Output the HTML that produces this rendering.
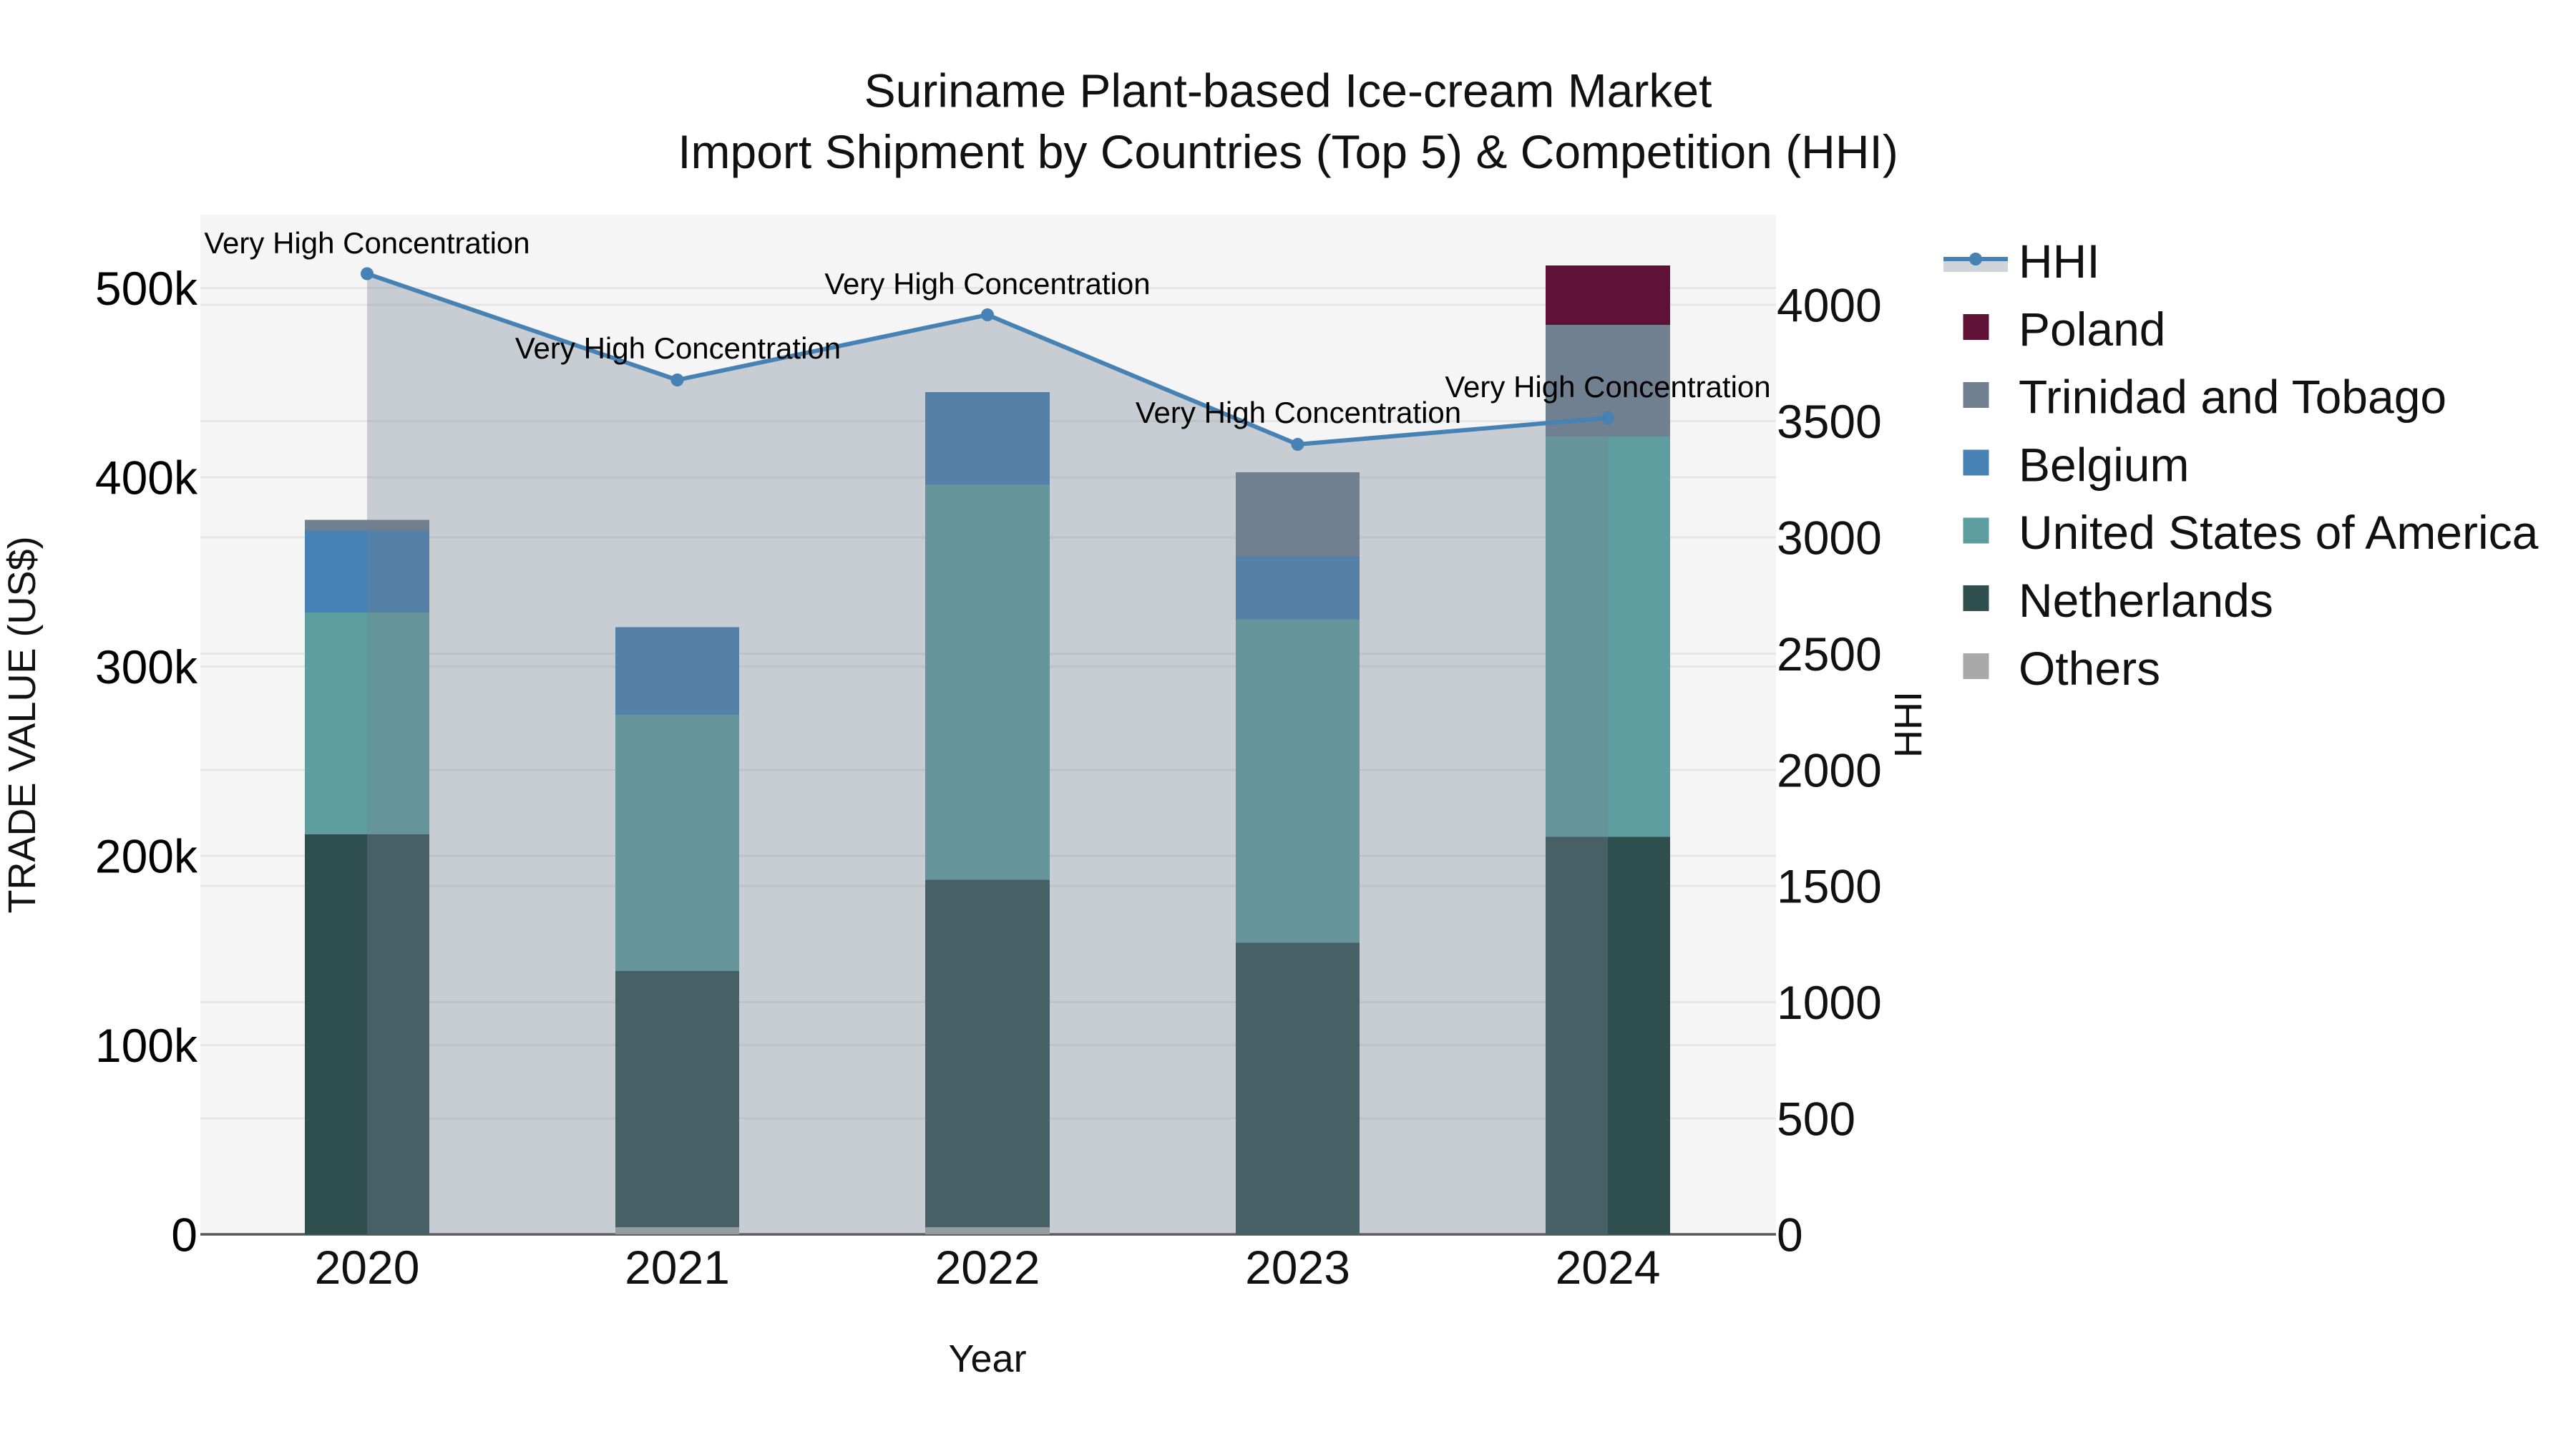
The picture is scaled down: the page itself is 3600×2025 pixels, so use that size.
<!DOCTYPE html>
<html lang="en">
<head>
<meta charset="utf-8">
<title>Suriname Plant-based Ice-cream Market</title>
<style>
html,body{margin:0;padding:0;background:#fff;width:3600px;height:2025px;overflow:hidden}
svg{display:block}
text{font-family:"Liberation Sans",sans-serif;fill:#111}
.t{font-size:66px}
.a{font-size:42px;fill:#000;text-anchor:middle}
.k{font-size:66px;fill:#000;text-anchor:end}
.r{font-size:66px;text-anchor:start}
.x{font-size:66px;text-anchor:middle}
.l{font-size:66px}
.h{font-size:54px;text-anchor:middle}
</style>
</head>
<body>
<svg xmlns="http://www.w3.org/2000/svg" width="3600" height="2025" viewBox="0 0 3600 2025">
<rect width="3600" height="2025" fill="#fff"/>
<rect x="280" y="300" width="2202" height="1425" fill="#f5f5f5"/>
<g stroke="#e6e6e6" stroke-width="3">
<path d="M280 402.5H2482M280 667H2482M280 931.5H2482M280 1196H2482M280 1460.5H2482"/>
<path d="M280 426H2482M280 588.5H2482M280 751H2482M280 913.5H2482M280 1076H2482M280 1238H2482M280 1400.5H2482M280 1563H2482"/>
</g>
<path d="M280 1725H2482" stroke="#555" stroke-width="3.5"/>
<g>
<rect x="426" y="1166" width="174" height="559" fill="#2f4f4f"/>
<rect x="426" y="856" width="174" height="310" fill="#5f9ea0"/>
<rect x="426" y="741.5" width="174" height="114.5" fill="#4682b4"/>
<rect x="426" y="726.5" width="174" height="15" fill="#708090"/>

<rect x="860" y="1715" width="173" height="10" fill="#a9a9a9"/>
<rect x="860" y="1357" width="173" height="358" fill="#2f4f4f"/>
<rect x="860" y="999" width="173" height="358" fill="#5f9ea0"/>
<rect x="860" y="876.5" width="173" height="122.5" fill="#4682b4"/>

<rect x="1293" y="1715" width="174" height="10" fill="#a9a9a9"/>
<rect x="1293" y="1229.5" width="174" height="485.5" fill="#2f4f4f"/>
<rect x="1293" y="677" width="174" height="552.5" fill="#5f9ea0"/>
<rect x="1293" y="548" width="174" height="129" fill="#4682b4"/>

<rect x="1727" y="1317.5" width="173" height="407.5" fill="#2f4f4f"/>
<rect x="1727" y="865.5" width="173" height="452" fill="#5f9ea0"/>
<rect x="1727" y="777" width="173" height="88.5" fill="#4682b4"/>
<rect x="1727" y="660" width="173" height="117" fill="#708090"/>

<rect x="2160" y="1169.5" width="174" height="555.5" fill="#2f4f4f"/>
<rect x="2160" y="610" width="174" height="559.5" fill="#5f9ea0"/>
<rect x="2160" y="454" width="174" height="156" fill="#708090"/>
<rect x="2160" y="371" width="174" height="83" fill="#601236"/>
</g>
<path d="M513 382.5L946.5 531L1380 440L1813.5 621L2247 584V1725H513Z" fill="#738294" fill-opacity="0.34"/>
<path d="M513 382.5L946.5 531L1380 440L1813.5 621L2247 584" fill="none" stroke="#4682b4" stroke-width="6" stroke-linejoin="round"/>
<g fill="#4682b4">
<circle cx="513" cy="382.5" r="9"/><circle cx="946.5" cy="531" r="9"/><circle cx="1380" cy="440" r="9"/><circle cx="1813.5" cy="621" r="9"/><circle cx="2247" cy="584" r="9"/>
</g>
<text class="a" x="513" y="354">Very High Concentration</text>
<text class="a" x="947.5" y="501">Very High Concentration</text>
<text class="a" x="1380" y="411">Very High Concentration</text>
<text class="a" x="1814.5" y="591">Very High Concentration</text>
<text class="a" x="2247" y="555">Very High Concentration</text>

<text class="t" x="1800" y="149.5" text-anchor="middle">Suriname Plant-based Ice-cream Market</text>
<text class="t" x="1800" y="235" text-anchor="middle">Import Shipment by Countries (Top 5) &amp; Competition (HHI)</text>

<text class="k" x="276" y="426">500k</text>
<text class="k" x="276" y="690.5">400k</text>
<text class="k" x="276" y="955">300k</text>
<text class="k" x="276" y="1219.5">200k</text>
<text class="k" x="276" y="1484">100k</text>
<text class="k" x="276" y="1748.5">0</text>

<text class="r" x="2483" y="449.5">4000</text>
<text class="r" x="2483" y="612">3500</text>
<text class="r" x="2483" y="774.5">3000</text>
<text class="r" x="2483" y="937">2500</text>
<text class="r" x="2483" y="1099.5">2000</text>
<text class="r" x="2483" y="1261.5">1500</text>
<text class="r" x="2483" y="1424">1000</text>
<text class="r" x="2483" y="1586.5">500</text>
<text class="r" x="2483" y="1748.5">0</text>

<text class="x" x="513" y="1794">2020</text>
<text class="x" x="946.5" y="1794">2021</text>
<text class="x" x="1380" y="1794">2022</text>
<text class="x" x="1813.5" y="1794">2023</text>
<text class="x" x="2247" y="1794">2024</text>

<text class="h" x="1380" y="1917">Year</text>
<text class="h" transform="translate(49 1013) rotate(-90)">TRADE VALUE (US$)</text>
<text class="h" transform="translate(2685 1012.5) rotate(-90)">HHI</text>

<rect x="2716" y="362" width="90" height="18" fill="#738294" fill-opacity="0.34"/>
<path d="M2716 362H2806" stroke="#4682b4" stroke-width="6"/>
<circle cx="2761" cy="362" r="9" fill="#4682b4"/>
<g>
<rect x="2743.5" y="439" width="36" height="36" fill="#601236"/>
<rect x="2743.5" y="534" width="36" height="36" fill="#708090"/>
<rect x="2743.5" y="628.5" width="36" height="36" fill="#4682b4"/>
<rect x="2743.5" y="723.5" width="36" height="36" fill="#5f9ea0"/>
<rect x="2743.5" y="818" width="36" height="36" fill="#2f4f4f"/>
<rect x="2743.5" y="913" width="36" height="36" fill="#a9a9a9"/>
</g>
<text class="l" x="2821" y="388">HHI</text>
<text class="l" x="2821" y="482.8">Poland</text>
<text class="l" x="2821" y="577.6">Trinidad and Tobago</text>
<text class="l" x="2821" y="672.4">Belgium</text>
<text class="l" x="2821" y="767.2">United States of America</text>
<text class="l" x="2821" y="862">Netherlands</text>
<text class="l" x="2821" y="956.8">Others</text>
</svg>
</body>
</html>
